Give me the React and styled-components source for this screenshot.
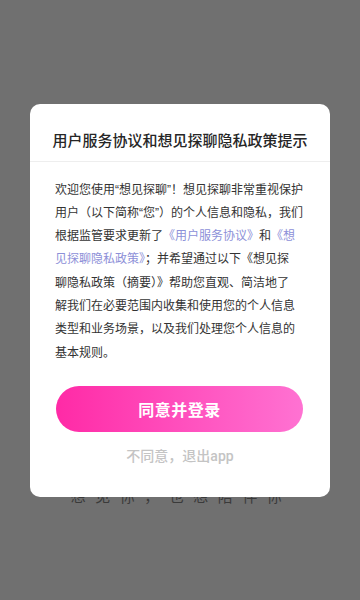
import React from "react";
import styled, { createGlobalStyle } from "styled-components";

const Global = createGlobalStyle`
  html, body { margin: 0; padding: 0; background: #707070; }
  body { font-family: "Liberation Sans", "Noto Sans CJK SC", sans-serif; }
  #root { width: 360px; height: 600px; }
`;

const Page = styled.div`
  width: 360px;
  height: 600px;
  background: #707070;
  display: flex;
  flex-direction: column;
  align-items: center;
  padding-top: 486px;
  box-sizing: border-box;
  overflow: hidden;
  position: relative;
`;

const Slogan = styled.div`
  font-family: "Noto Sans CJK SC", sans-serif;
  font-size: 15px;
  line-height: 20px;
  letter-spacing: 9.5px;
  color: #3a3a3a;
  margin-left: 2px;
`;

const Overlay = styled.div`
  position: absolute;
  inset: 0;
  display: flex;
  align-items: center;
  justify-content: center;
`;

const Dialog = styled.div`
  width: 300px;
  height: 393px;
  background: #ffffff;
  border-radius: 10px;
  display: flex;
  flex-direction: column;
  box-sizing: border-box;
`;

const Header = styled.div`
  padding: 26px 0 11px;
  border-bottom: 1px solid #eeeeee;
  text-align: center;
  font-family: "Noto Sans CJK SC", sans-serif;
  font-size: 15px;
  line-height: 20px;
  font-weight: 500;
  color: #262626;
`;

const Body = styled.div`
  padding: 17px 0 0 25px;
  font-size: 12px;
  line-height: 23.33px;
  color: #333333;
  white-space: nowrap;
`;

const Link = styled.span`
  color: #8d90d8;
`;

const PrimaryButton = styled.button`
  margin: 21px 27px 0 26px;
  height: 46px;
  border: none;
  border-radius: 23px;
  background: linear-gradient(90deg, #ff2aa6 0%, #ff4fbd 50%, #ff72d2 100%);
  color: #ffffff;
  font-family: "Noto Sans CJK SC", sans-serif;
  font-size: 16px;
  font-weight: 700;
  letter-spacing: 0.5px;
  cursor: pointer;
`;

const SecondaryButton = styled.button`
  margin-top: 14px;
  align-self: center;
  background: none;
  border: none;
  padding: 0;
  font-family: "Roboto", "Noto Sans CJK SC", sans-serif;
  font-size: 14px;
  line-height: 20px;
  font-weight: 500;
  color: #c4c4c4;
  cursor: pointer;
`;

export default function App() {
  return (
    <>
      <Global />
      <Page>
        <Slogan>想见你，也想陪伴你</Slogan>
        <Overlay>
          <Dialog>
            <Header>用户服务协议和想见探聊隐私政策提示</Header>
            <Body>
              欢迎您使用“想见探聊”！想见探聊非常重视保护
              <br />
              用户（以下简称“您”）的个人信息和隐私，我们
              <br />
              根据监管要求更新了<Link>《用户服务协议》</Link>和<Link>《想</Link>
              <br />
              <Link>见探聊隐私政策》</Link>；并希望通过以下《想见探
              <br />
              聊隐私政策（摘要）》帮助您直观、简洁地了
              <br />
              解我们在必要范围内收集和使用您的个人信息
              <br />
              类型和业务场景，以及我们处理您个人信息的
              <br />
              基本规则。
            </Body>
            <PrimaryButton>同意并登录</PrimaryButton>
            <SecondaryButton>不同意，退出app</SecondaryButton>
          </Dialog>
        </Overlay>
      </Page>
    </>
  );
}
